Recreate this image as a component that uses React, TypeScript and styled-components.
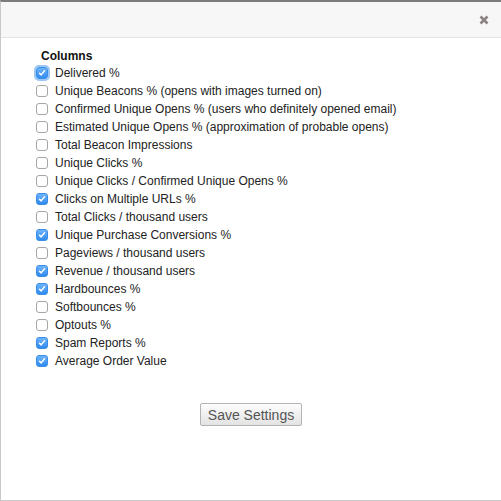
import React, { useState } from "react"
import styled, { createGlobalStyle } from "styled-components"

const COLUMNS = [
  { label: "Delivered %", checked: true, focused: true },
  { label: "Unique Beacons % (opens with images turned on)", checked: false },
  { label: "Confirmed Unique Opens % (users who definitely opened email)", checked: false },
  { label: "Estimated Unique Opens % (approximation of probable opens)", checked: false },
  { label: "Total Beacon Impressions", checked: false },
  { label: "Unique Clicks %", checked: false },
  { label: "Unique Clicks / Confirmed Unique Opens %", checked: false },
  { label: "Clicks on Multiple URLs %", checked: true },
  { label: "Total Clicks / thousand users", checked: false },
  { label: "Unique Purchase Conversions %", checked: true },
  { label: "Pageviews / thousand users", checked: false },
  { label: "Revenue / thousand users", checked: true },
  { label: "Hardbounces %", checked: true },
  { label: "Softbounces %", checked: false },
  { label: "Optouts %", checked: false },
  { label: "Spam Reports %", checked: true },
  { label: "Average Order Value", checked: true },
]

const GlobalStyle = createGlobalStyle`
  body {
    margin: 0;
    background: white;
    font-family: "Liberation Sans", Arial, sans-serif;
  }
`

const Modal = styled.div`
  box-sizing: border-box;
  width: 501px;
  height: 501px;
  display: flex;
  flex-direction: column;
  background: white;
  border-top: 2px solid #7c7c7c;
  border-left: 1px solid #c9c9c9;
  border-bottom: 1px solid #c9c9c9;
`

const Header = styled.div`
  height: 35px;
  display: flex;
  align-items: center;
  justify-content: flex-end;
  padding-right: 10px;
  background: #f7f7f7;
  border-bottom: 1px solid #e3e3e3;
`

const CloseButton = styled.button`
  border: none;
  background: none;
  padding: 0;
  width: 14px;
  height: 14px;
  display: flex;
  align-items: center;
  justify-content: center;
  cursor: pointer;
`

const Body = styled.div`
  display: flex;
  flex-direction: column;
  padding: 11px 0 0 35px;
`

const Heading = styled.div`
  font-size: 12px;
  font-weight: bold;
  color: #111;
  line-height: 15px;
  padding-left: 5px;
`

const List = styled.div`
  display: flex;
  flex-direction: column;
`

const Row = styled.label`
  display: flex;
  align-items: center;
  gap: 7px;
  height: 18px;
  font-size: 12px;
  color: #222;
  cursor: default;
`

const Box = styled.span<{ checked: boolean; focused?: boolean }>`
  box-sizing: border-box;
  width: 12px;
  height: 12px;
  border-radius: 3px;
  display: flex;
  align-items: center;
  justify-content: center;
  background: ${ ({ checked }) => checked ? "linear-gradient(#6cb3fa, #2f8bf2)" : "white" };
  border: 1px solid ${ ({ checked }) => checked ? "#3a8ee6" : "#a6a6a6" };
  box-shadow: ${ ({ focused }) => focused ? "0 0 0 2px #9cc7f5" : "none" };
`

const Footer = styled.div`
  display: flex;
  justify-content: center;
  padding-top: 33px;
`

const SaveButton = styled.button`
  width: 102px;
  height: 23px;
  padding: 0;
  font-family: "Liberation Sans", Arial, sans-serif;
  font-size: 14px;
  color: #555;
  border: 1px solid #b3b3b3;
  border-radius: 2px;
  background: linear-gradient(#fdfdfd, #e3e3e3);
`

const Check = () => (
  <svg width="8" height="8" viewBox="0 0 8 8">
    <path d="M1.5 4.2 L3.2 5.9 L6.5 1.8" fill="none" stroke="white" strokeWidth={1.5} strokeLinecap="round" strokeLinejoin="round" />
  </svg>
)

export default function App() {
  const [ items, setItems ] = useState( COLUMNS )

  const toggle = ( idx: number ) =>
    setItems( items.map( ( it, i ) => i === idx ? { ...it, checked: !it.checked } : it ) )

  return (
    <>
      <GlobalStyle />
      <Modal>
        <Header>
          <CloseButton aria-label="close">
            <svg width="10" height="10" viewBox="0 0 10 10">
              <path d="M1.5 1.5 L8.5 8.5 M8.5 1.5 L1.5 8.5" stroke="#8b8383" strokeWidth={2.6} strokeLinecap="butt" />
            </svg>
          </CloseButton>
        </Header>

        <Body>
          <Heading>Columns</Heading>
          <List>
            { items.map( ( it, idx ) => (
              <Row key={ "col-" + idx } onClick={ () => toggle( idx ) }>
                <Box checked={ it.checked } focused={ it.focused }>
                  { it.checked && <Check /> }
                </Box>
                { it.label }
              </Row>
            ) ) }
          </List>
        </Body>

        <Footer>
          <SaveButton>Save Settings</SaveButton>
        </Footer>
      </Modal>
    </>
  )
}
